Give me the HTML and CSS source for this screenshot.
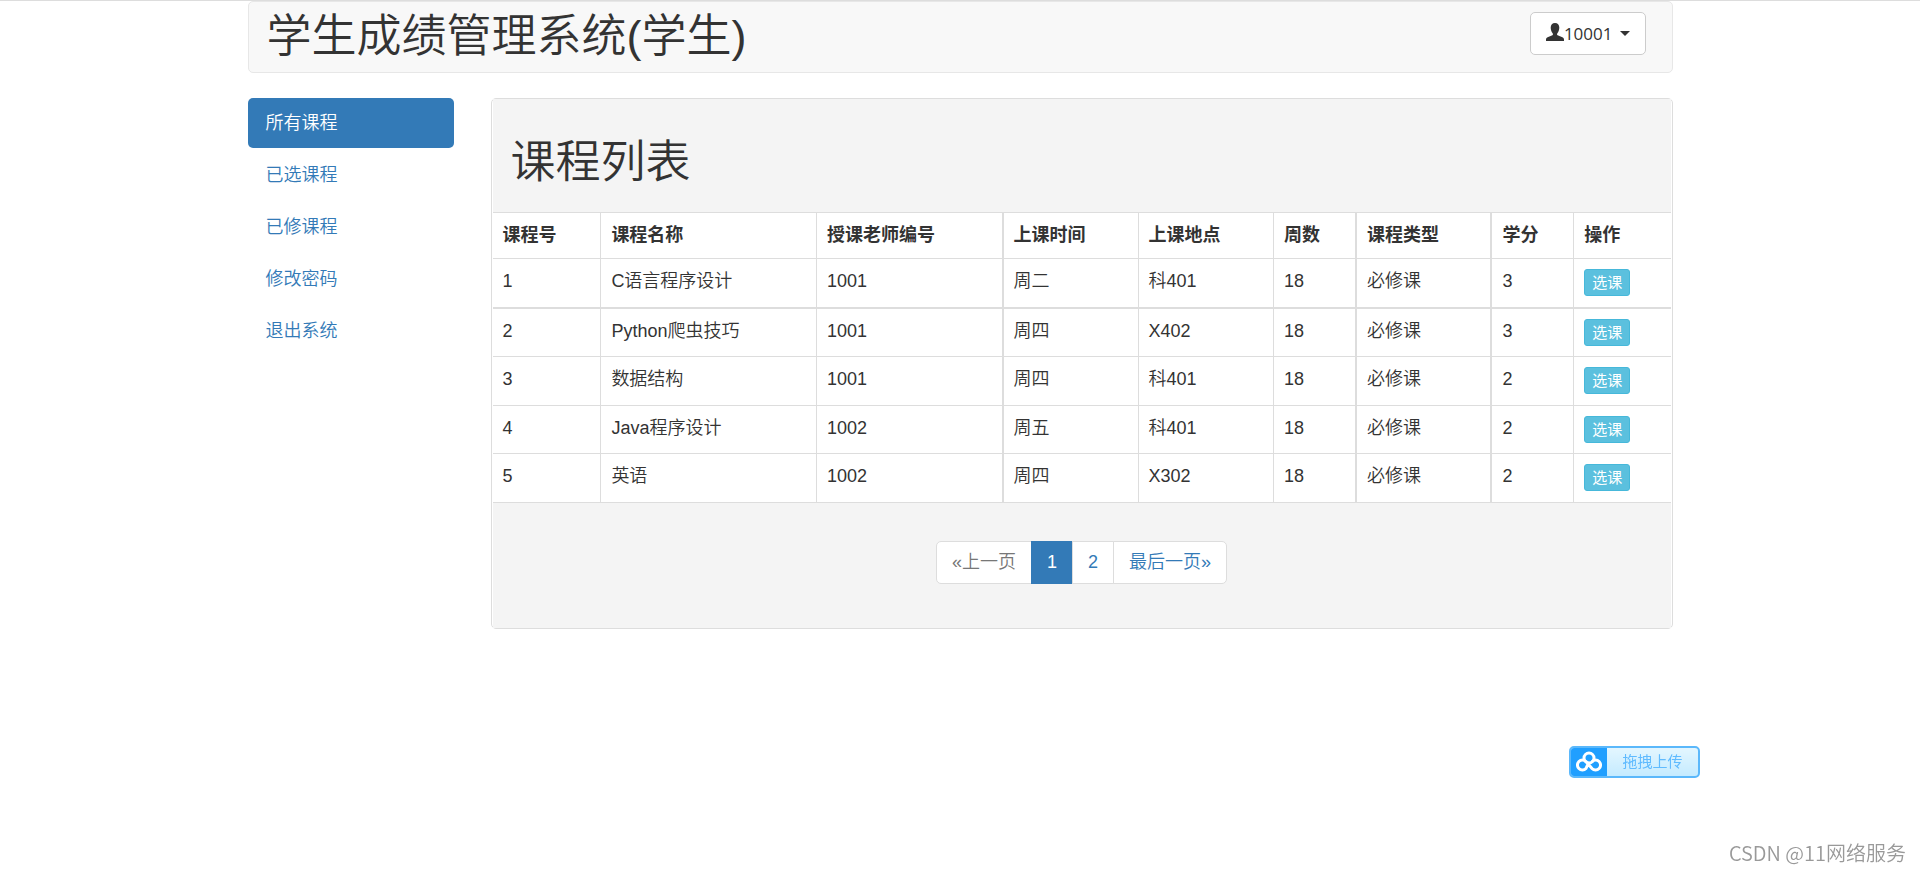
FILE: index.html
```
<!DOCTYPE html>
<html lang="zh-CN">
<head>
    <meta charset="UTF-8">
    <meta name="viewport" content="width=device-width, initial-scale=1.0">
    <title>学生成绩管理系统</title>
    <link rel="stylesheet" href="styles.css">
</head>
<body>
    <div class="container">
        <header class="navbar">
            <h1>学生成绩管理系统(学生)</h1>
            <button type="button" class="btn-user">
                <svg class="icon-user" viewBox="0 0 18 18" aria-hidden="true">
                    <path d="M9 0C6.300 0 4.700 1.900 4.700 4.600c0 2 .6 4.200 1.900 5.600.5.6.5 1.700-.2 2.100L1.600 14.300C.4 14.800 0 15.600 0 16.800V18h18v-1.200c0-1.200-.4-2-1.600-2.500l-4.800-2c-.7-.4-.7-1.500-.2-2.100 1.300-1.400 1.900-3.600 1.900-5.600C13.300 1.900 11.700 0 9 0z"/>
                </svg>
                <span>10001</span>
                <span class="caret"></span>
            </button>
        </header>

        <div class="row">
            <nav class="sidebar">
                <a href="#" class="active">所有课程</a>
                <a href="#">已选课程</a>
                <a href="#">已修课程</a>
                <a href="#">修改密码</a>
                <a href="#">退出系统</a>
            </nav>

            <main class="panel">
                <div class="panel-heading">
                    <h1>课程列表</h1>
                </div>
                <table class="table">
                    <colgroup>
                        <col class="col-id">
                        <col class="col-name">
                        <col class="col-teacher">
                        <col class="col-medium">
                        <col class="col-medium">
                        <col class="col-small">
                        <col class="col-medium">
                        <col class="col-small">
                        <col>
                    </colgroup>
                    <thead>
                        <tr>
                            <th>课程号</th>
                            <th>课程名称</th>
                            <th>授课老师编号</th>
                            <th>上课时间</th>
                            <th>上课地点</th>
                            <th>周数</th>
                            <th>课程类型</th>
                            <th>学分</th>
                            <th>操作</th>
                        </tr>
                    </thead>
                    <tbody>
                        <tr>
                            <td>1</td>
                            <td>C语言程序设计</td>
                            <td>1001</td>
                            <td>周二</td>
                            <td>科401</td>
                            <td>18</td>
                            <td>必修课</td>
                            <td>3</td>
                            <td><button type="button" class="btn-info">选课</button></td>
                        </tr>
                        <tr>
                            <td>2</td>
                            <td>Python爬虫技巧</td>
                            <td>1001</td>
                            <td>周四</td>
                            <td>X402</td>
                            <td>18</td>
                            <td>必修课</td>
                            <td>3</td>
                            <td><button type="button" class="btn-info">选课</button></td>
                        </tr>
                        <tr>
                            <td>3</td>
                            <td>数据结构</td>
                            <td>1001</td>
                            <td>周四</td>
                            <td>科401</td>
                            <td>18</td>
                            <td>必修课</td>
                            <td>2</td>
                            <td><button type="button" class="btn-info">选课</button></td>
                        </tr>
                        <tr>
                            <td>4</td>
                            <td>Java程序设计</td>
                            <td>1002</td>
                            <td>周五</td>
                            <td>科401</td>
                            <td>18</td>
                            <td>必修课</td>
                            <td>2</td>
                            <td><button type="button" class="btn-info">选课</button></td>
                        </tr>
                        <tr>
                            <td>5</td>
                            <td>英语</td>
                            <td>1002</td>
                            <td>周四</td>
                            <td>X302</td>
                            <td>18</td>
                            <td>必修课</td>
                            <td>2</td>
                            <td><button type="button" class="btn-info">选课</button></td>
                        </tr>
                    </tbody>
                </table>
                <div class="panel-footer">
                    <ul class="pagination">
                        <li class="disabled"><a href="#">«上一页</a></li>
                        <li class="active"><a href="#">1</a></li>
                        <li><a href="#">2</a></li>
                        <li><a href="#">最后一页»</a></li>
                    </ul>
                </div>
            </main>
        </div>
    </div>

    <button type="button" class="upload">
        <span class="upload-icon">
            <svg viewBox="0 0 26 22" aria-hidden="true">
                <circle cx="13" cy="7" r="5"/>
                <path d="M13 11 10 17.500A5 5 0 1 1 10 10.500L16 17.500A5 5 0 1 0 16 10.500"/>
            </svg>
        </span>
        <span class="upload-text">拖拽上传</span>
    </button>

    <div class="watermark">CSDN @11网络服务</div>
</body>
</html>
```

FILE: styles.css
```
* {
    box-sizing: border-box;
}

body {
    margin: 0;
    border-top: 1px solid #dddddd;
    background-color: #fff;
    color: #333;
    font-family: "Liberation Sans", "Noto Sans CJK SC", sans-serif;
    font-size: 18px;
    font-weight: 350;
    line-height: 25px;
}

a {
    color: #337ab7;
    text-decoration: none;
}

h1 {
    margin: 0;
    font-size: 45px;
    font-weight: 350;
    line-height: 50px;
}

button {
    font-family: inherit;
    cursor: pointer;
}

.container {
    max-width: 1463px;
    margin: 0 auto;
    padding: 0 19px;
}

/* top bar */
.navbar {
    display: flex;
    justify-content: space-between;
    align-items: flex-start;
    min-height: 72px;
    margin-bottom: 25px;
    padding: 10px 26px 10px 18px;
    background-color: #f8f8f8;
    border: 1px solid #e7e7e7;
    border-radius: 5px;
}

.btn-user {
    display: flex;
    align-items: center;
    height: 43px;
    padding: 0 15px;
    background-color: #fff;
    border: 1px solid #ccc;
    border-radius: 5px;
    color: #333;
    font-family: "Open Sans", sans-serif;
    font-size: 17px;
    line-height: 25px;
}

.icon-user {
    width: 18px;
    height: 18px;
    margin-bottom: 4px;
    fill: #333;
}

.caret {
    margin-left: 7px;
    border-top: 5px solid #333;
    border-left: 5px solid transparent;
    border-right: 5px solid transparent;
}

.row {
    display: flex;
    align-items: flex-start;
    gap: 37px;
}

/* left menu */
.sidebar {
    display: flex;
    flex: 0 0 206px;
    flex-direction: column;
    gap: 2px;
}

.sidebar a {
    padding: 13px 18px 12px;
    border-radius: 5px;
}

.sidebar .active {
    background-color: #337ab7;
    color: #fff;
}

/* course panel */
.panel {
    flex: 1;
    min-width: 0;
    padding: 0 1px;
    border: 1px solid #ddd;
    border-radius: 5px;
}

.panel-heading {
    padding: 39px 18px 24px;
    background-color: #f4f4f4;
}

.table {
    width: 100%;
    table-layout: fixed;
    border-collapse: collapse;
}

.table th,
.table td {
    padding: 10px;
    border: 1px solid #ddd;
    text-align: left;
    vertical-align: top;
}

.table td {
    height: 49px;
}

.table tbody tr:nth-child(even) td {
    height: 48px;
}

.table th:first-child,
.table td:first-child {
    border-left: none;
}

.table th:last-child,
.table td:last-child {
    border-right: none;
}

.table tbody tr:first-child td {
    border-bottom-width: 2px;
}

.table th:nth-child(3),
.table td:nth-child(3),
.table th:nth-child(6),
.table td:nth-child(6),
.table th:nth-child(7),
.table td:nth-child(7) {
    border-right-width: 2px;
}

.col-id {
    width: 9.2%;
}

.col-name {
    width: 18.3%;
}

.col-teacher {
    width: 15.8%;
}

.col-medium {
    width: 11.5%;
}

.col-small {
    width: 7%;
}

.btn-info {
    display: block;
    height: 27px;
    padding: 0 7px;
    background-color: #5bc0de;
    border: 1px solid #46b8da;
    border-radius: 3px;
    color: #fff;
    font-size: 15px;
    line-height: 23px;
}

.panel-footer {
    display: flex;
    justify-content: center;
    padding: 38px 0 44px;
    background-color: #f4f4f4;
}

.pagination {
    display: flex;
    margin: 0;
    padding: 0;
    list-style: none;
}

.pagination a {
    display: block;
    margin-left: -1px;
    padding: 8px 15px;
    background-color: #fff;
    border: 1px solid #ddd;
}

.pagination li:first-child a {
    margin-left: 0;
    border-radius: 5px 0 0 5px;
}

.pagination li:last-child a {
    border-radius: 0 5px 5px 0;
}

.pagination .active a {
    background-color: #337ab7;
    border-color: #337ab7;
    color: #fff;
}

.pagination .disabled a {
    color: #777;
}

/* floating upload button */
.upload {
    position: fixed;
    right: 220px;
    bottom: 94px;
    display: flex;
    width: 131px;
    height: 32px;
    padding: 0;
    overflow: hidden;
    background: linear-gradient(#e3f6ff, #c5ebff);
    border: 2px solid #5bb8fb;
    border-radius: 5px;
    color: #60bbff;
    font-size: 15px;
}

.upload-icon {
    display: flex;
    justify-content: center;
    align-items: center;
    width: 36px;
    height: 28px;
    background-color: #209fff;
}

.upload-icon svg {
    width: 26px;
    height: 22px;
    fill: none;
    stroke: #fff;
    stroke-width: 3;
}

.upload-text {
    flex: 1;
    line-height: 28px;
}

.watermark {
    position: fixed;
    right: 14px;
    bottom: 7px;
    color: #999;
    font-family: "Noto Sans CJK SC", sans-serif;
    font-size: 20px;
}
```
